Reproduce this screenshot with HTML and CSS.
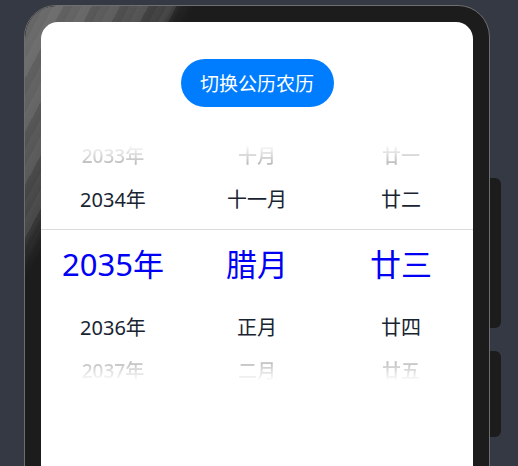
FILE: index.html
```html
<!DOCTYPE html>
<html lang="zh">
<head>
	<meta charset="UTF-8">
	<title>农历选择</title>
	<link rel="stylesheet" href="styles.css">
</head>
<body>
	<div class="phone">
		<span class="key key-power"></span>
		<span class="key key-volume"></span>
		<div class="screen">
			<button class="switch">切换公历农历</button>
			<div class="picker">
				<div class="row fade-top">
					<span>2033年</span><span>十月</span><span>廿一</span>
				</div>
				<div class="row">
					<span>2034年</span><span>十一月</span><span>廿二</span>
				</div>
				<div class="row selected">
					<span>2035年</span><span>腊月</span><span>廿三</span>
				</div>
				<div class="row">
					<span>2036年</span><span>正月</span><span>廿四</span>
				</div>
				<div class="row fade-bottom">
					<span>2037年</span><span>二月</span><span>廿五</span>
				</div>
			</div>
		</div>
	</div>
</body>
</html>
```

FILE: styles.css
```css
*{
	margin: 0;
	padding: 0;
	box-sizing: border-box;
}
body{
	background: #353943;
	overflow: hidden;
	height: 466px;
	font-family: "Noto Sans", "Noto Sans CJK SC", sans-serif;
}
.phone{
	position: relative;
	width: 466px;
	height: 500px;
	margin: 5px 0 0 24px;
	padding: 16px;
	background: #1c1c1c;
	border: 1px solid #6e6e6e;
	border-radius: 32px;
}
/* glossy stripes on the top-left of the frame */
.phone::before{
	content: "";
	position: absolute;
	left: 0;
	top: 0;
	width: 100%;
	height: 100%;
	border-radius: 31px;
	background:
		repeating-linear-gradient(118deg, rgba(255,255,255,0.08) 0 9px, rgba(255,255,255,0) 9px 17px, rgba(255,255,255,0.04) 17px 25px),
		linear-gradient(122deg, #6a6a6a 0%, #5c5c5c 8%, #4c4c4c 14%, #363636 19%, rgba(28,28,28,0) 22%);
	-webkit-mask-image: linear-gradient(122deg, #000 19%, transparent 22%);
	mask-image: linear-gradient(122deg, #000 19%, transparent 22%);
}
.key{
	position: absolute;
	right: -12px;
	width: 11px;
	background: #1c1c1c;
	border-radius: 0 6px 6px 0;
}
.key-power{
	top: 172px;
	height: 150px;
}
.key-volume{
	top: 345px;
	height: 86px;
}
.screen{
	position: relative;
	height: 480px;
	background: #fff;
	border-radius: 17px;
	padding-top: 37px;
	display: flex;
	flex-direction: column;
	align-items: center;
}
.switch{
	width: 153px;
	height: 48px;
	border: none;
	border-radius: 24px;
	background: #007dff;
	color: #fff;
	font-family: inherit;
	font-size: 19px;
}
.picker{
	width: 100%;
	margin-top: 26px;
}
.row{
	display: grid;
	grid-template-columns: repeat(3, 1fr);
	align-items: center;
	justify-items: center;
	height: 44px;
	font-size: 20px;
	color: #182431;
}
.row:nth-child(2){
	height: 43px;
}
.row.selected{
	height: 75px;
	margin-top: 9px;
	padding-bottom: 10px;
	border-top: 1px solid #dcdcdc;
	font-size: 31px;
	color: #0000f5;
}
.fade-top, .fade-bottom{
	font-size: 19px;
	font-weight: 500;
	color: #bdbdbd;
}
.fade-top{
	-webkit-mask-image: linear-gradient(to bottom, transparent 25%, #000 70%);
	mask-image: linear-gradient(to bottom, transparent 25%, #000 70%);
}
.fade-bottom{
	-webkit-mask-image: linear-gradient(to top, transparent 25%, #000 70%);
	mask-image: linear-gradient(to top, transparent 25%, #000 70%);
}
```
